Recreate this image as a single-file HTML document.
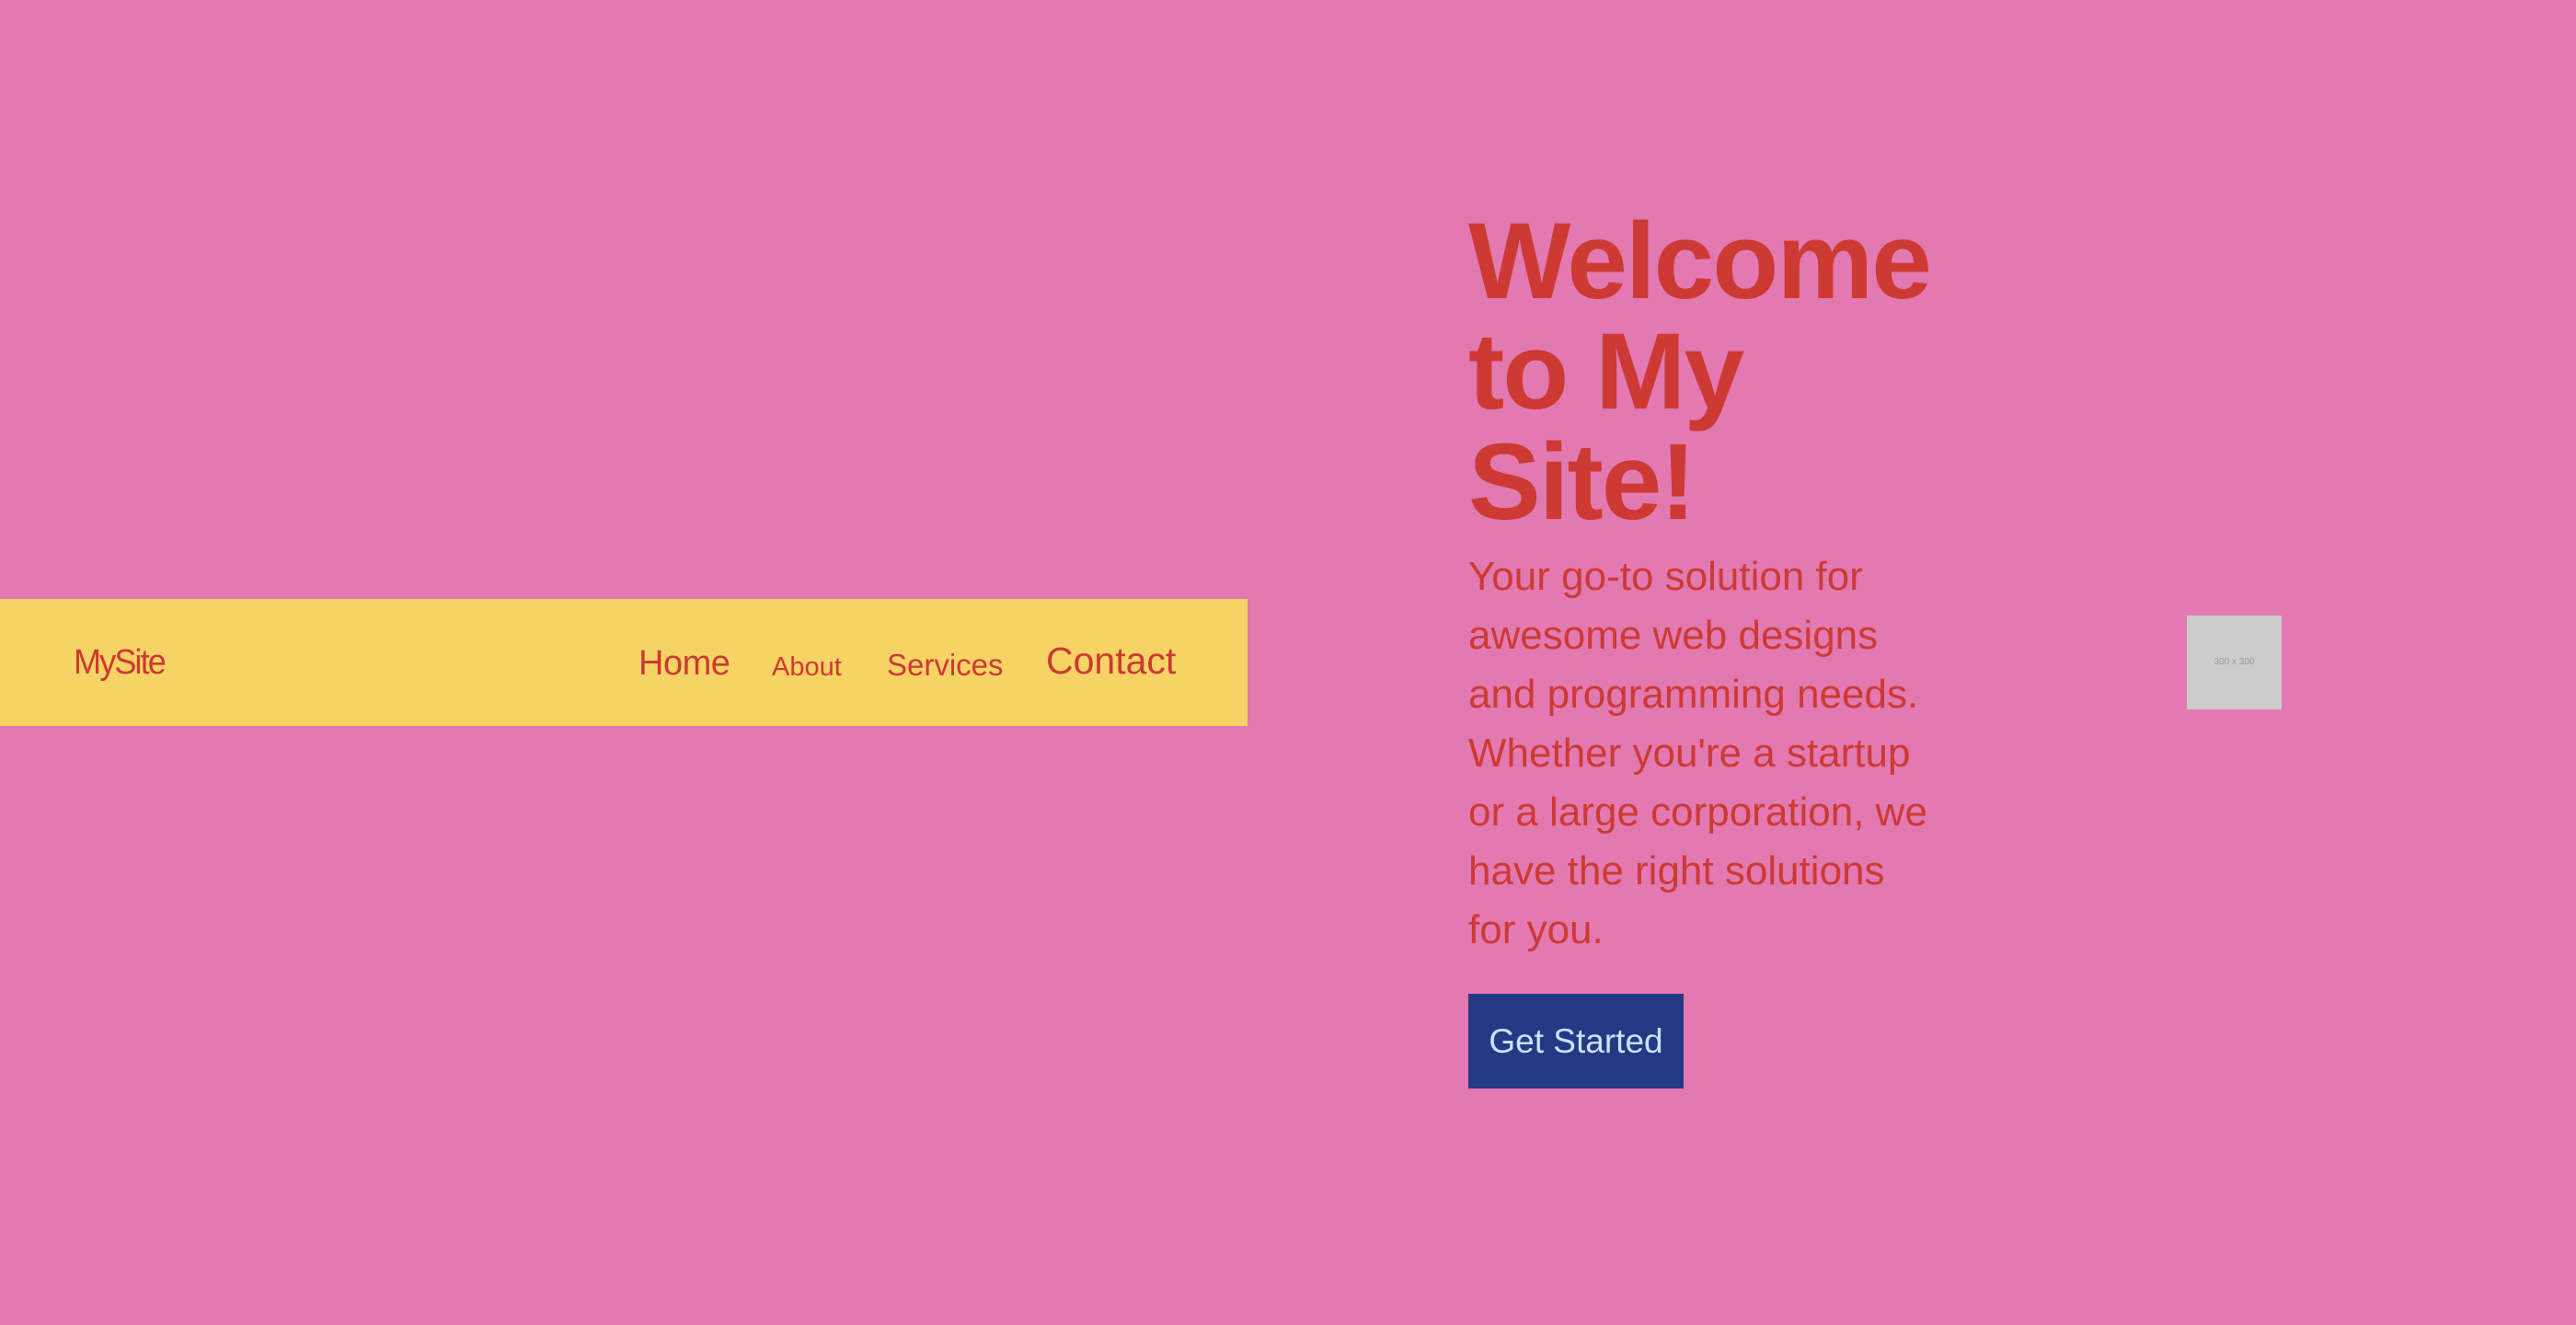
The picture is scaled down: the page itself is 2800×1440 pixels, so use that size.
<!DOCTYPE html>
<html><head><meta charset="utf-8"><style>
html,body{margin:0;padding:0}
body{width:2800px;height:1440px;background:#e279b0;position:relative;overflow:hidden;font-family:"Liberation Sans",Arial,sans-serif;color:#cc3a33}
.nav{position:absolute;left:0;top:651px;width:1356px;height:138px;background:#f6d365}
.t{position:absolute;white-space:nowrap;line-height:1}
h1{position:absolute;left:1596px;top:224px;margin:0;font-size:118px;line-height:120px;font-weight:bold;letter-spacing:-2px;width:560px}
p{position:absolute;left:1596px;top:595px;margin:0;font-size:44px;line-height:64px;white-space:nowrap}
.btn{position:absolute;left:1596px;top:1080px;width:234px;height:103px;background:#233984;color:#cfe0ff;font-size:37px;line-height:103px;text-align:center}
.ph{position:absolute;left:2377px;top:669px;width:103px;height:102px;background:#cccccc;color:#999;font-size:10px;line-height:102px;text-align:center}
</style></head><body>
<div class="nav"></div>
<div class="t" style="left:80px;top:701px;font-size:38px;font-weight:normal;letter-spacing:-2px;transform:scaleX(0.95);transform-origin:left">MySite</div>
<div class="t" style="left:694px;top:702px;font-size:38px;letter-spacing:-0.5px">Home</div>
<div class="t" style="left:839px;top:711px;font-size:29px">About</div>
<div class="t" style="left:964px;top:706px;font-size:33px">Services</div>
<div class="t" style="left:1137px;top:698px;font-size:41px">Contact</div>
<h1>Welcome to My Site!</h1>
<p>Your go-to solution for<br>awesome web designs<br>and programming needs.<br>Whether you're a startup<br>or a large corporation, we<br>have the right solutions<br>for you.</p>
<div class="btn">Get Started</div>
<div class="ph">300 x 300</div>
</body></html>
